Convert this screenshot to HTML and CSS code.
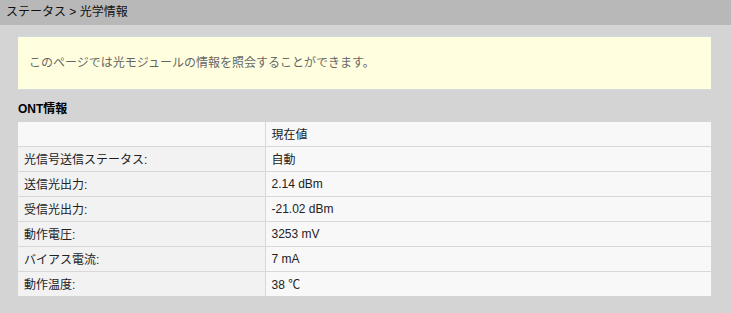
FILE: index.html
```html
<!DOCTYPE html>
<html lang="ja">
<head>
<meta charset="utf-8">
<title>光学情報</title>
<link rel="stylesheet" href="styles.css">
</head>
<body>
<div class="crumb">ステータス &gt; 光学情報</div>
<div class="content">
  <div class="notice">このページでは光モジュールの情報を照会することができます。</div>
  <div class="title">ONT情報</div>
  <table class="info">
    <tr class="head"><td class="label"></td><td class="value">現在値</td></tr>
    <tr><td class="label">光信号送信ステータス:</td><td class="value">自動</td></tr>
    <tr><td class="label">送信光出力:</td><td class="value">2.14 dBm</td></tr>
    <tr><td class="label">受信光出力:</td><td class="value">-21.02 dBm</td></tr>
    <tr><td class="label">動作電圧:</td><td class="value">3253 mV</td></tr>
    <tr><td class="label">バイアス電流:</td><td class="value">7 mA</td></tr>
    <tr><td class="label">動作温度:</td><td class="value">38 ℃</td></tr>
  </table>
</div>
</body>
</html>
```
FILE: styles.css
```css
html, body {
  margin: 0;
  padding: 0;
  background: #d4d4d4;
  font-family: "Liberation Sans", "Noto Sans CJK JP", sans-serif;
  font-size: 12px;
  color: #000;
}
.crumb {
  height: 25px;
  line-height: 25px;
  background: #b8b8b8;
  padding-left: 6px;
  font-size: 12px;
  color: #111;
}
.content {
  padding: 11px 20px 0 18px;
}
.notice {
  height: 52px;
  line-height: 52px;
  background: #ffffe0;
  border-top: 1px solid #cfdde0;
  border-bottom: 1px solid #cfdde0;
  padding-left: 11px;
  color: #666;
  font-size: 12px;
}
.title {
  padding: 10px 0 4px;
  line-height: 18px;
  font-weight: bold;
  font-size: 12px;
}
.info {
  width: 100%;
  border-collapse: collapse;
  border-spacing: 0;
}
.info td {
  height: 24px;
  padding: 0 0 0 6px;
  border-top: 1px solid #d8d8d8;
  box-sizing: border-box;
  font-size: 12px;
  color: #222;
}
.info tr:first-child td {
  border-top: none;
  height: 24px;
}
.info tr + tr td {
  height: 25px;
}
.info .label {
  width: 247px;
  background: #f2f2f2;
  border-right: 1px solid #d8d8d8;
}
.info .value {
  background: #f8f8f8;
}
.info .head td {
  background: #f8f8f8;
}
```
